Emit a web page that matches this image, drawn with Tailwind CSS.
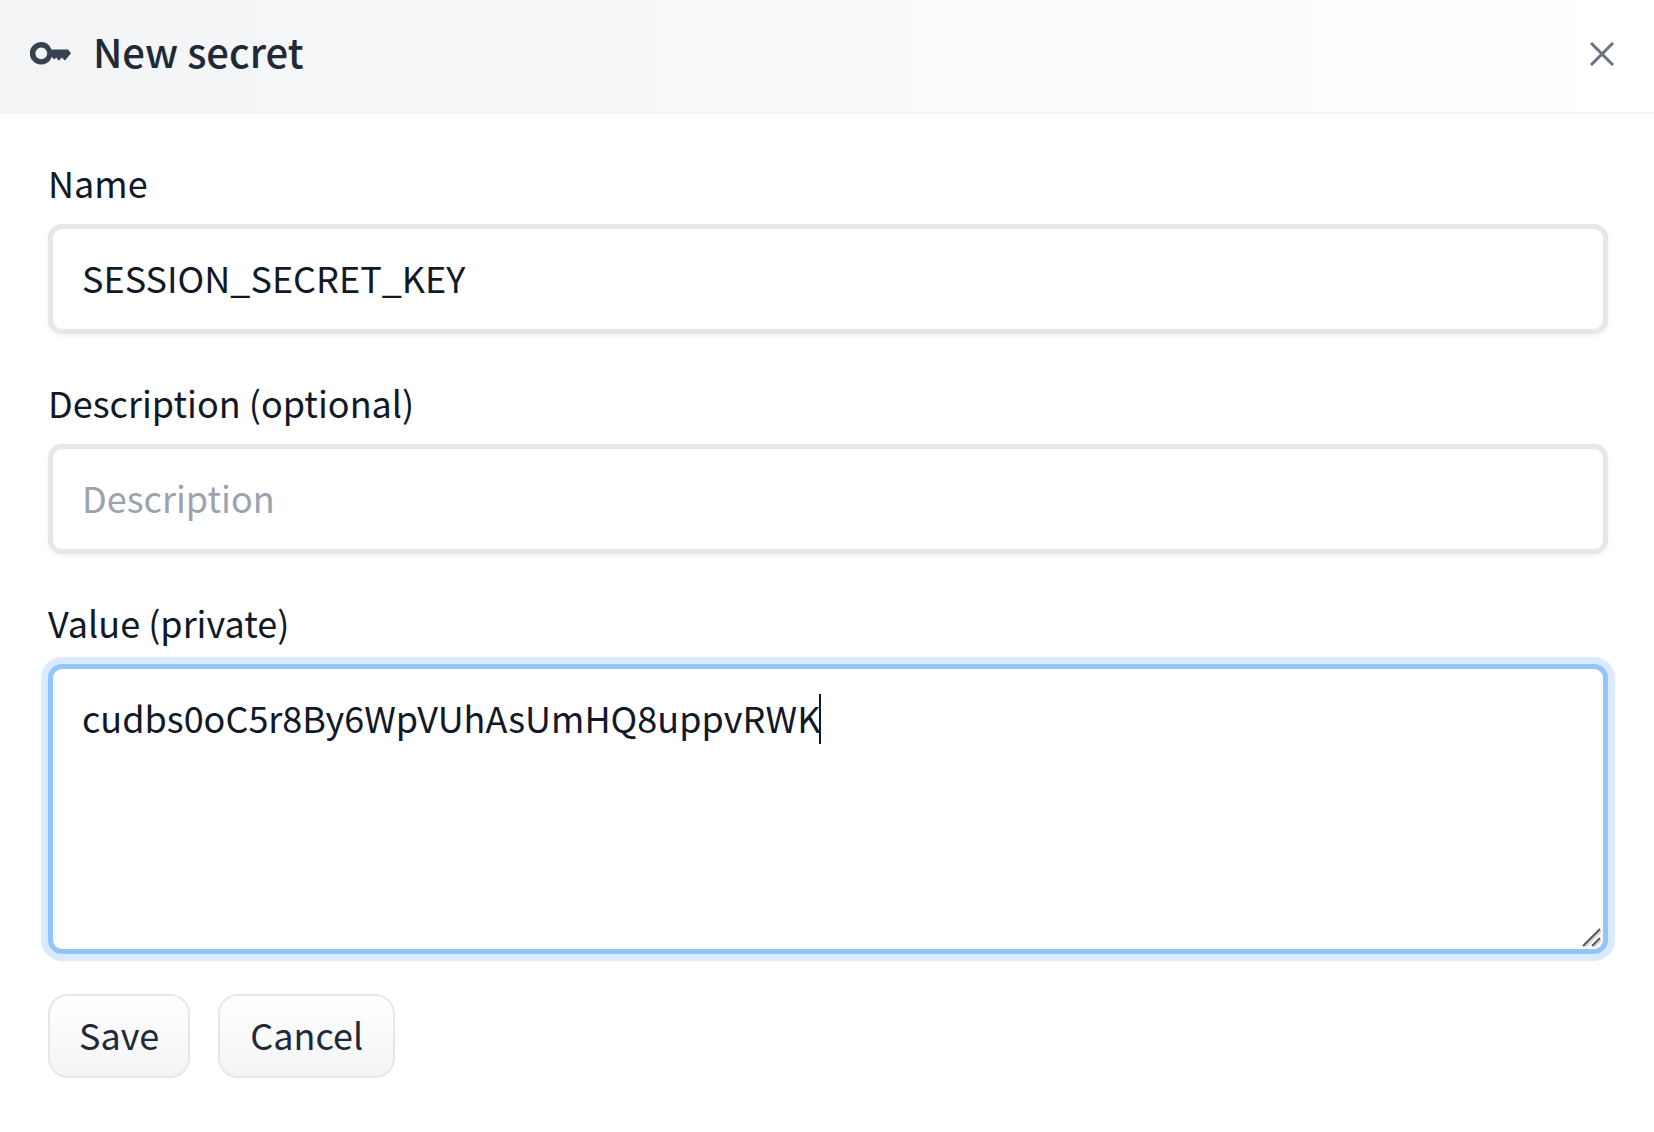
<!DOCTYPE html>
<html lang="en">
<head>
<meta charset="utf-8">
<meta name="viewport" content="width=device-width, initial-scale=1">
<title>New secret</title>
<script src="https://cdn.jsdelivr.net/npm/@tailwindcss/browser@4"></script>
</head>
<body class="min-h-screen bg-white font-['Noto_Sans_CJK_SC','Noto_Sans',sans-serif] text-4xl text-[#111827]">
<header class="flex h-[114px] items-center justify-between border-b-2 border-[#f3f4f6] bg-linear-to-r from-[#f3f4f6] to-white pr-9 pl-[30px]">
  <h1 class="flex items-center gap-[22px] pb-2.5 text-[40px] leading-[60px] font-medium text-[#1f2937]">
    <svg class="mt-1 h-[23px] w-[41px] text-[#374151]" viewBox="0 0 41 23" fill="currentColor" aria-hidden="true">
      <path fill-rule="evenodd" d="M11.3 0A11.3 11.3 0 0 1 21.500 7.500H38L41 11.200 35 18.500 31.800 15.500 28.800 18.800 26.300 15.500 24.300 17.500 21.800 15A11.300 11.300 0 1 1 11.300 0ZM11.300 5.400a5.900 5.900 0 1 0 0 11.800a5.900 5.900 0 0 0 0-11.800Z"/>
    </svg>
    New secret
  </h1>
  <button type="button" aria-label="Close" class="mb-1 flex p-1 text-[#6b7280]">
    <svg class="h-6 w-6" viewBox="0 0 24 24" fill="none" stroke="currentColor" stroke-width="3" aria-hidden="true"><path d="M1 1L23 23M23 1L1 23"/></svg>
  </button>
</header>
<form class="pt-[38px] pr-[46px] pb-12 pl-12">
  <div class="mb-[38px] flex flex-col gap-3">
    <label for="name" class="leading-[60px]">Name</label>
    <input id="name" type="text" value="SESSION_SECRET_KEY" class="h-[110px] w-full rounded-[14px] border-5 border-[#e5e7eb] bg-white px-[29px] pt-[18px] pb-[22px] leading-[60px] shadow-[0_2px_5px_rgba(0,0,0,0.06)] outline-none">
  </div>
  <div class="mb-[38px] flex flex-col gap-3">
    <label for="description" class="leading-[60px]">Description (optional)</label>
    <input id="description" type="text" placeholder="Description" class="h-[110px] w-full rounded-[14px] border-5 border-[#e5e7eb] bg-white px-[29px] pt-[18px] pb-[22px] leading-[60px] shadow-[0_2px_5px_rgba(0,0,0,0.06)] outline-none placeholder:text-[#9ca3af]">
  </div>
  <div class="mb-10 flex flex-col gap-3">
    <label for="value" class="leading-[60px]">Value (private)</label>
    <div class="relative">
      <textarea id="value" spellcheck="false" class="block h-[290px] w-full resize-none rounded-[14px] border-5 border-[#93c5fd] bg-white px-[29px] pt-[18px] pb-[22px] leading-[60px] shadow-[0_0_1px_7px_#dbeafe,0_2px_5px_rgba(0,0,0,0.06)] outline-none">cudbs0oC5r8By6WpVUhAsUmHQ8uppvRWK</textarea>
      <span class="absolute top-[30px] left-[771px] h-[50px] w-0.5 bg-[#111827]" aria-hidden="true"></span>
      <svg class="pointer-events-none absolute right-[6px] bottom-[6px] h-5 w-5" viewBox="0 0 20 20" fill="none" stroke-width="2" aria-hidden="true">
        <path stroke="#d1d5db" d="M3 19L19 3M12 19L19 12"/>
        <path stroke="#555" d="M1 18L18 1M10 18L18 10"/>
      </svg>
    </div>
  </div>
  <div class="flex gap-7">
    <button type="submit" class="h-[84px] rounded-[20px] border-2 border-[#e5e7eb] bg-linear-to-b from-white to-[#f3f4f6] px-[29px] pb-1 text-[#1f2937]">Save</button>
    <button type="button" class="h-[84px] rounded-[20px] border-2 border-[#e5e7eb] bg-linear-to-b from-white to-[#f3f4f6] px-[30px] pb-1 text-[#1f2937]">Cancel</button>
  </div>
</form>
</body>
</html>
